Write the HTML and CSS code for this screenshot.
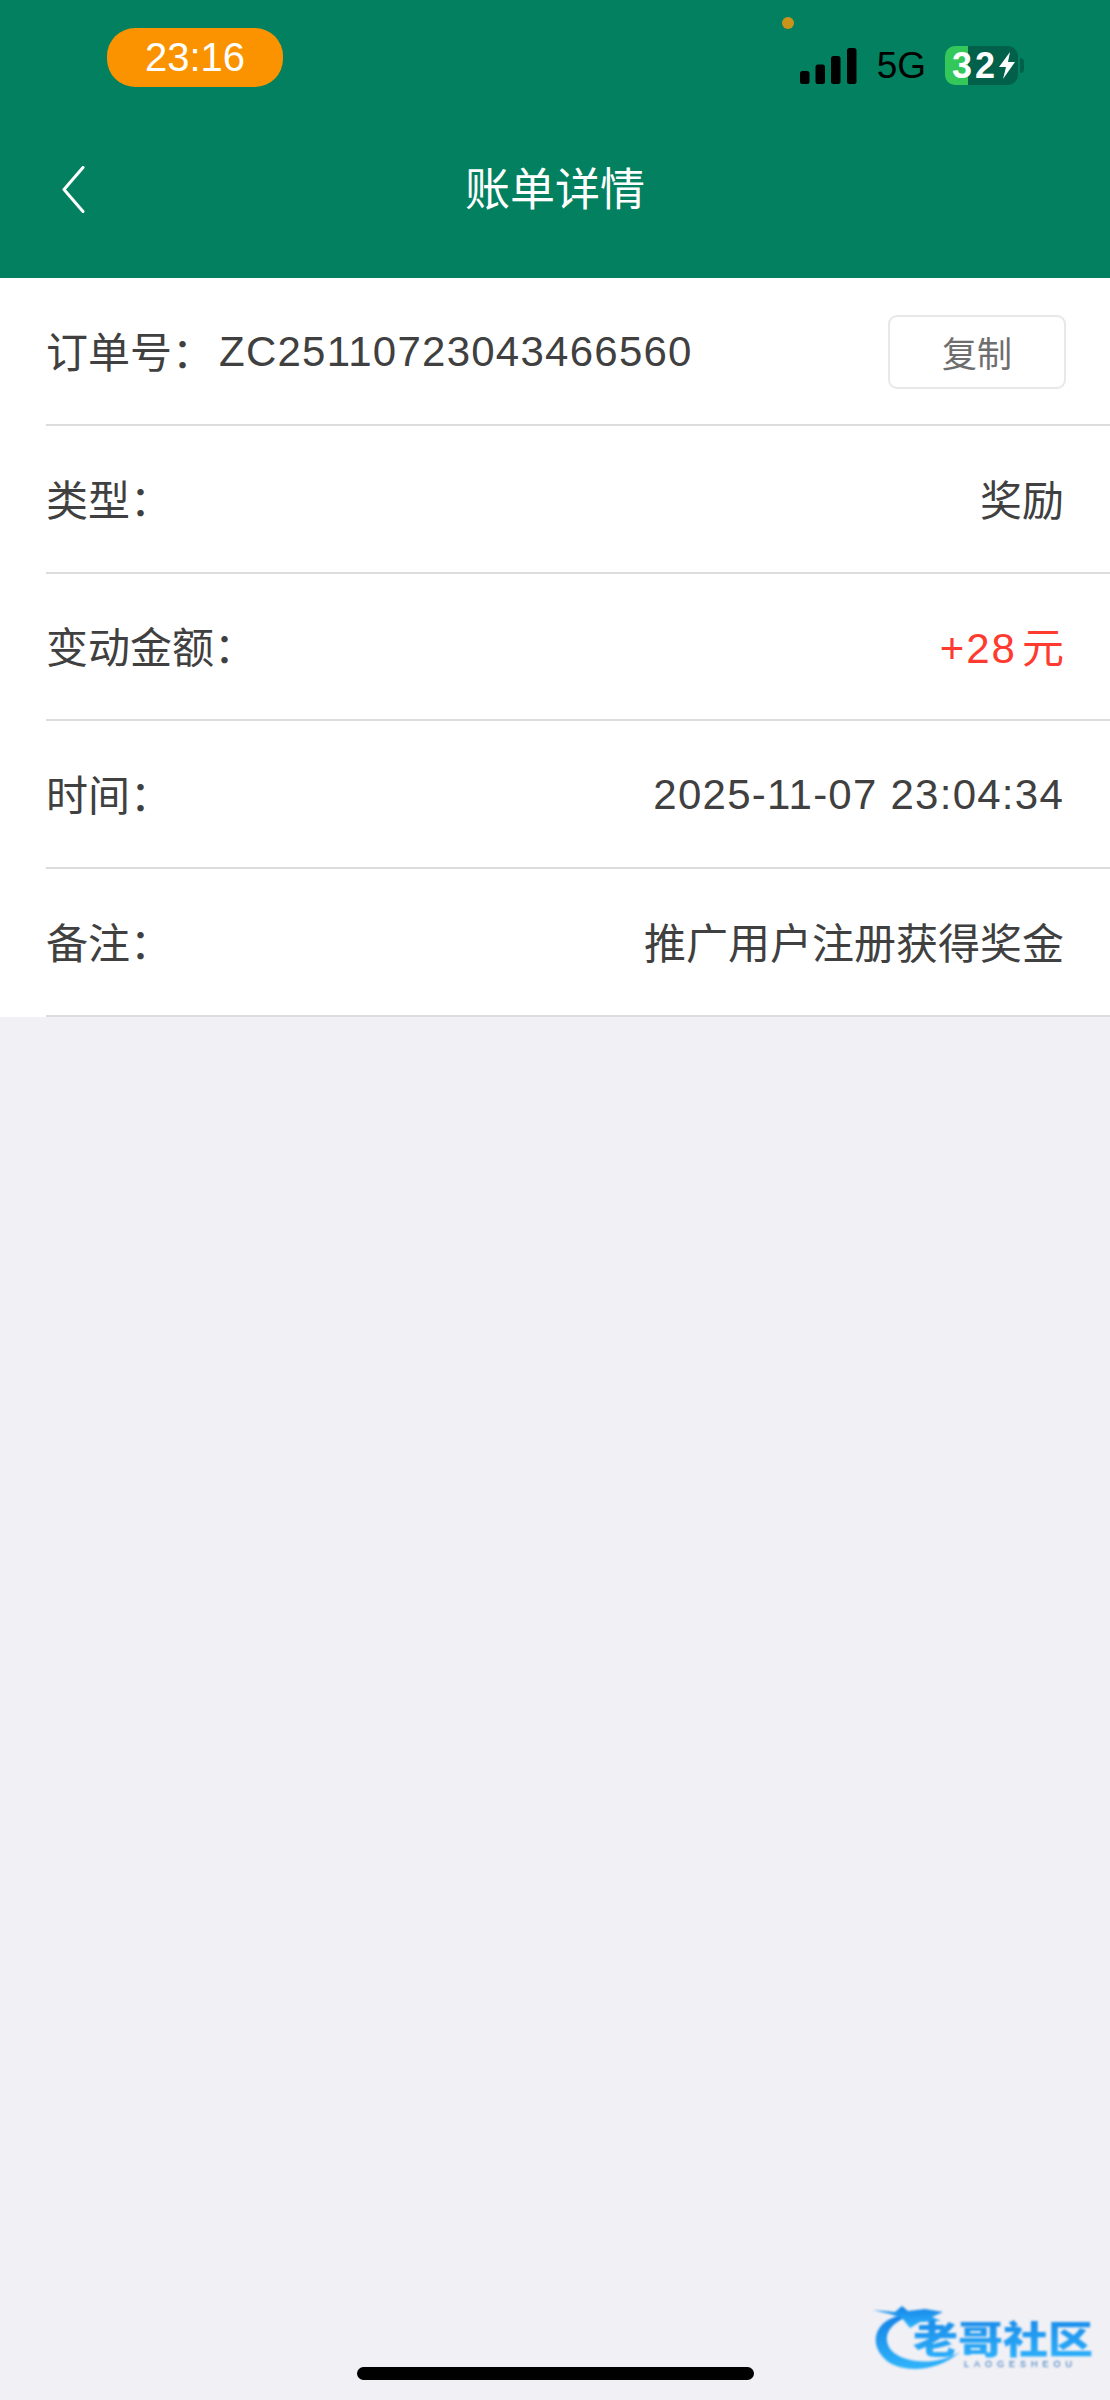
FILE: index.html
```html
<!DOCTYPE html>
<html lang="zh-CN">
<head>
<meta charset="utf-8">
<title>账单详情</title>
<link rel="stylesheet" href="styles.css">
</head>
<body>
<div class="page">
  <header class="header">
    <div class="status">
      <div class="time">23:16</div>
      <span class="cam-dot"></span>
      <div class="status-right">
        <svg class="signal" width="57" height="36" viewBox="0 0 57 36"><rect x="0" y="23" width="9.5" height="13" rx="2.5"/><rect x="15.5" y="16.5" width="9.5" height="19.5" rx="2.5"/><rect x="31" y="8" width="9.5" height="28" rx="2.5"/><rect x="47" y="0" width="9.5" height="36" rx="2.5"/></svg>
        <span class="net">5G</span>
        <div class="battery">
          <span class="batt-text">32</span>
          <svg class="bolt" width="18" height="27" viewBox="0 0 18 27"><path d="M12 0 L1 15 H8 L5 27 L17 10 H10 Z"/></svg>
          <span class="batt-nub"></span>
        </div>
      </div>
    </div>
    <nav class="nav">
      <svg class="back" width="26" height="50" viewBox="0 0 26 50"><path d="M22 1.5 L3 23.5 L22 45.5"/></svg>
      <h1 class="title">账单详情</h1>
      <span></span>
    </nav>
  </header>

  <main class="list">
    <div class="row">
      <div class="order"><span class="label">订单号：</span><span class="latin order-no">ZC25110723043466560</span></div>
      <button class="copy">复制</button>
    </div>
    <div class="row"><span class="label">类型：</span><span class="value">奖励</span></div>
    <div class="row"><span class="label">变动金额：</span><span class="value amount"><span class="amount-num">+28</span><span class="unit">元</span></span></div>
    <div class="row"><span class="label">时间：</span><span class="value latin">2025-11-07 23:04:34</span></div>
    <div class="row"><span class="label">备注：</span><span class="value">推广用户注册获得奖金</span></div>
  </main>

  <svg class="mark" width="270" height="120" viewBox="0 0 270 120">
    <defs>
      <linearGradient id="blue" x1="0" y1="0" x2="0" y2="1">
        <stop offset="0" stop-color="#1583e6"/>
        <stop offset="1" stop-color="#2fb4fb"/>
      </linearGradient>
    </defs>
    <path class="mark-shape" d="M58 36 C35 42 30 62 42 76 C54 92 92 96 120 72 C96 86 64 84 51 70 C42 58 48 46 64 38 Z"/>
    <path class="mark-shape" d="M33 30 L55 32 L62 26 L68 31 L85 29 L103 32 L92 37 L101 41 L80 42 L70 48 L62 38 L50 34 Z"/>
    <text class="mark-text" x="73" y="73" textLength="180" lengthAdjust="spacingAndGlyphs">老哥社区</text>
    <text class="mark-sub" x="124" y="87" textLength="108">LAOGESHEOU</text>
  </svg>

  <div class="home-bar"></div>
</div>
</body>
</html>
```

FILE: styles.css
```css
* { box-sizing: border-box; }

html, body { margin: 0; padding: 0; }

body {
  background: #f0f0f5;
  font-family: "Liberation Sans", "Noto Sans CJK SC", sans-serif;
  color: #404040;
}

.page {
  position: relative;
  width: 1110px;
  height: 2400px;
  overflow: hidden;
  background: #f0f0f5;
}

.header {
  height: 278px;
  background: #028060;
  display: flex;
  flex-direction: column;
}

.status {
  display: flex;
  align-items: center;
  height: 59px;
  margin-top: 28px;
  padding-left: 107px;
}

.time {
  width: 176px;
  height: 59px;
  border-radius: 28px;
  background: #fb9300;
  color: #fff;
  font-size: 40px;
  line-height: 59px;
  text-align: center;
}

.cam-dot {
  position: absolute;
  left: 782px;
  top: 17px;
  width: 12px;
  height: 12px;
  border-radius: 50%;
  background: #cb931a;
}

.status-right {
  display: flex;
  align-items: center;
  margin-left: auto;
  margin-top: 16px;
  padding-right: 92px;
}

.signal { fill: #000; display: block; }

.net {
  margin-left: 20px;
  font-size: 37px;
  color: #000;
}

.battery {
  position: relative;
  display: flex;
  align-items: center;
  width: 73px;
  height: 39px;
  margin-left: 19px;
  padding-left: 7px;
  border-radius: 10px;
  background: linear-gradient(to right, #34c759 0, #34c759 23px, #00604a 23px);
  color: #fff;
}

.batt-text {
  font-size: 36px;
  font-weight: 700;
  letter-spacing: 3px;
  line-height: 39px;
}

.bolt { fill: #fff; display: block; flex: none; }

.batt-nub {
  position: absolute;
  left: 75px;
  top: 12px;
  width: 4px;
  height: 15px;
  border-radius: 0 4px 4px 0;
  background: #00604a;
}

.nav {
  display: grid;
  grid-template-columns: 1fr auto 1fr;
  align-items: center;
  height: 50px;
  margin-top: 79px;
  padding-left: 61px;
  padding-right: 61px;
}

.back {
  display: block;
  fill: none;
  stroke: #fff;
  stroke-width: 3;
  stroke-linecap: round;
  stroke-linejoin: round;
}

.title {
  margin: 0;
  font-size: 45px;
  font-weight: 400;
  line-height: 50px;
  color: #fff;
}

.list { background: #fff; }

.row {
  display: flex;
  align-items: center;
  justify-content: space-between;
  height: 147.75px;
  margin-left: 46px;
  padding-right: 46px;
  padding-bottom: 3px;
  border-bottom: 2px solid #dcdcdc;
  font-size: 42px;
}

.order { display: flex; align-items: center; }

.label { display: inline-block; }

.latin {
  letter-spacing: 1.25px;
  padding-top: 5px;
}

.order-no { margin-left: 5px; }

.value { white-space: nowrap; }

.amount { color: #ff3b30; }

.amount-num { letter-spacing: 2px; }

.unit { margin-left: 5px; }

.copy {
  width: 178px;
  height: 74px;
  margin-top: 5px;
  margin-right: -2px;
  padding: 0;
  border: 2px solid #e8e8e8;
  border-radius: 9px;
  background: #fff;
  color: #6e6e6e;
  font-family: "Liberation Sans", "Noto Sans CJK SC", sans-serif;
  font-size: 35px;
}

.mark {
  position: absolute;
  left: 840px;
  top: 2280px;
  filter: blur(0.8px);
}

.mark-shape { fill: url(#blue); }

.mark-text {
  fill: url(#blue);
  font-family: "Noto Sans CJK SC", sans-serif;
  font-size: 38px;
  font-weight: 900;
}

.mark-sub {
  fill: #2a6fb8;
  font-family: "Liberation Sans", sans-serif;
  font-size: 9px;
}

.home-bar {
  position: absolute;
  left: 357px;
  top: 2367px;
  width: 397px;
  height: 13px;
  border-radius: 7px;
  background: #000;
}
```
